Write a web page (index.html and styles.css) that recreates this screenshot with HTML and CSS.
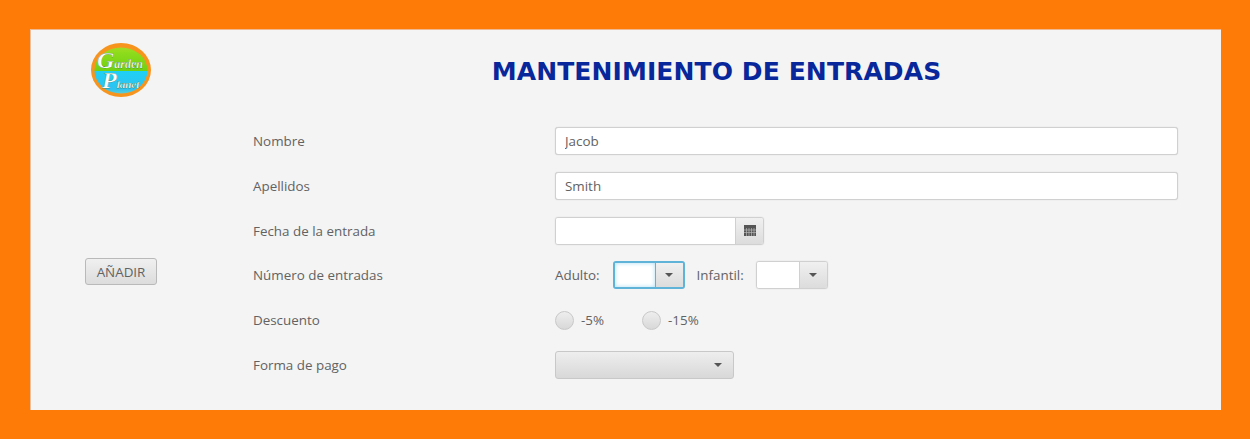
FILE: index.html
```html
<!DOCTYPE html>
<html lang="es">
  <head>
    <meta charset="UTF-8" />
    <meta name="viewport" content="width=device-width, initial-scale=1.0" />
    <title>Mantenimiento de entradas</title>
    <link rel="stylesheet" href="styles.css">
  </head>
  <body>
    <main class="panel">
      <header class="top">
        <svg class="logo" width="60" height="54" viewBox="0 0 60 54">
          <defs>
            <clipPath id="logo-clip"><ellipse cx="30" cy="27.5" rx="26.5" ry="23" /></clipPath>
            <linearGradient id="logo-top" x1="0" y1="0" x2="0" y2="1">
              <stop offset="0" stop-color="#b8d92a" />
              <stop offset="0.35" stop-color="#8ddc1c" />
              <stop offset="1" stop-color="#6fd012" />
            </linearGradient>
            <linearGradient id="logo-bottom" x1="0" y1="0" x2="0" y2="1">
              <stop offset="0" stop-color="#1fd0f4" />
              <stop offset="0.7" stop-color="#2ec2f2" />
              <stop offset="1" stop-color="#86d6b8" />
            </linearGradient>
          </defs>
          <ellipse cx="30" cy="27" rx="30" ry="27" fill="#f7941d" />
          <g clip-path="url(#logo-clip)">
            <rect x="0" y="0" width="60" height="28" fill="url(#logo-top)" />
            <rect x="0" y="28" width="60" height="26" fill="url(#logo-bottom)" />
          </g>
          <text class="logo-text" x="6" y="25"><tspan class="logo-big">G</tspan><tspan class="logo-small">arden</tspan></text>
          <text class="logo-text" x="11" y="45"><tspan class="logo-big">P</tspan><tspan class="logo-planet">lanet</tspan></text>
        </svg>
        <h1 class="title">MANTENIMIENTO DE ENTRADAS</h1>
      </header>

      <div class="content">
        <aside class="side">
          <button class="btn">AÑADIR</button>
        </aside>

        <form class="form">
          <label class="row">
            <span class="label">Nombre</span>
            <input class="field" type="text" value="Jacob" />
          </label>

          <label class="row">
            <span class="label">Apellidos</span>
            <input class="field" type="text" value="Smith" />
          </label>

          <div class="row">
            <span class="label">Fecha de la entrada</span>
            <div class="combo combo-date">
              <input class="combo-input" type="text" />
              <span class="combo-btn">
                <svg width="12" height="11" viewBox="0 0 12 11">
                  <rect width="12" height="11" fill="#555" />
                  <path d="M0 5h12M0 7.5h12M2.5 3v8M5 3v8M7.5 3v8M10 3v8" stroke="#b8b8b8" stroke-width="0.7" fill="none" />
                </svg>
              </span>
            </div>
          </div>

          <div class="row">
            <span class="label">Número de entradas</span>
            <div class="inline">
              <span class="text text-first">Adulto:</span>
              <div class="combo combo-num focused">
                <input class="combo-input" type="text" />
                <span class="combo-btn"><i class="arrow"></i></span>
              </div>
              <span class="text text-second">Infantil:</span>
              <div class="combo combo-num">
                <input class="combo-input" type="text" />
                <span class="combo-btn"><i class="arrow"></i></span>
              </div>
            </div>
          </div>

          <div class="row">
            <span class="label">Descuento</span>
            <div class="inline radios">
              <label class="radio"><i class="dot"></i>-5%</label>
              <label class="radio"><i class="dot"></i>-15%</label>
            </div>
          </div>

          <div class="row">
            <span class="label">Forma de pago</span>
            <div class="select"><i class="arrow"></i></div>
          </div>
        </form>
      </div>
    </main>
  </body>
</html>
```

FILE: styles.css
```css
* {
  box-sizing: border-box;
}

body {
  margin: 0;
  height: 439px;
  padding: 29px 29px 29px 30px;
  background: #ff7b07;
  font-family: "Open Sans", "Liberation Sans", sans-serif;
  font-size: 13.4px;
  color: #626262;
  overflow: hidden;
}

.panel {
  height: 381px;
  background: #f4f4f4;
  border-top: 1px solid #f0b890;
  border-left: 1px solid #e8c0a0;
}

/* Header */
.top {
  display: flex;
  align-items: flex-start;
  height: 97px;
  padding-left: 60px;
  padding-top: 13px;
}

.logo {
  flex: none;
}

.logo-text {
  fill: #fff;
  stroke: #1b6b2a;
  stroke-width: 0.25;
  font-family: "Liberation Serif", serif;
  font-style: italic;
  font-weight: bold;
}

.logo-big {
  font-size: 24px;
}

.logo-small {
  font-size: 12px;
}

.logo-planet {
  font-size: 11px;
}

.title {
  flex: 1;
  margin: 12px 0 0 61px;
  text-align: center;
  line-height: 34px;
  font-family: "DejaVu Sans", sans-serif;
  font-size: 25px;
  font-weight: bold;
  letter-spacing: 0.1px;
  color: #08279b;
}

/* Body */
.content {
  display: flex;
}

.side {
  width: 222px;
  padding: 131px 0 0 54px;
}

.btn {
  width: 72px;
  height: 27px;
  padding: 0;
  border: 1px solid #b9b9b9;
  border-radius: 3px;
  background: linear-gradient(#f0f0f0, #dcdcdc);
  font: inherit;
  color: #626262;
}

.form {
  flex: 1;
  display: flex;
  flex-direction: column;
  gap: 16.8px;
}

.row {
  display: flex;
  align-items: center;
  height: 28px;
}

.label {
  width: 302px;
  flex: none;
}

.field,
.combo-input {
  font: inherit;
  color: #626262;
  background: #fff;
  border: 0;
  outline: 0;
}

.field {
  width: 623px;
  height: 28px;
  padding: 0 9px;
  border: 1px solid #d0d0d0;
  border-radius: 3px;
  box-shadow: 0 0 1px #c4c4c4;
}

.combo {
  display: flex;
  height: 28px;
  border: 1px solid #d0d0d0;
  border-radius: 3px;
  box-shadow: 0 0 1px #c4c4c4;
  overflow: hidden;
}

.combo-date {
  width: 209px;
}

.combo-num {
  width: 72px;
}

.combo-input {
  flex: 1;
  min-width: 0;
  padding: 0;
}

.combo-btn {
  display: flex;
  flex: none;
  width: 28px;
  align-items: center;
  justify-content: center;
  border-left: 1px solid #d0d0d0;
  background: linear-gradient(#f0f0f0, #dcdcdc);
}

.focused {
  border: 2px solid #5fb2d8;
  box-shadow: none;
}

.focused .combo-input {
  box-shadow: inset 0 0 4px #a8dcf2;
}

.focused .combo-btn {
  border-left-color: #5fb2d8;
}

.arrow {
  display: block;
  width: 0;
  height: 0;
  border-left: 4px solid transparent;
  border-right: 4px solid transparent;
  border-top: 4px solid #555;
}

.inline {
  display: flex;
  align-items: center;
}

.text {
  margin-right: 12px;
}

.text-first {
  margin-right: 13px;
}

.text-second {
  margin-left: 12px;
}

.radios {
  gap: 38px;
}

.radio {
  display: flex;
  align-items: center;
  gap: 7px;
}

.dot {
  display: block;
  width: 19px;
  height: 19px;
  border: 1px solid #c8c8c8;
  border-radius: 50%;
  background: linear-gradient(#eee, #d8d8d8);
}

.select {
  display: flex;
  align-items: center;
  justify-content: flex-end;
  width: 179px;
  height: 28px;
  padding-right: 11px;
  border: 1px solid #c8c8c8;
  border-radius: 3px;
  background: linear-gradient(#eeeeee, #d8d8d8);
}
```
